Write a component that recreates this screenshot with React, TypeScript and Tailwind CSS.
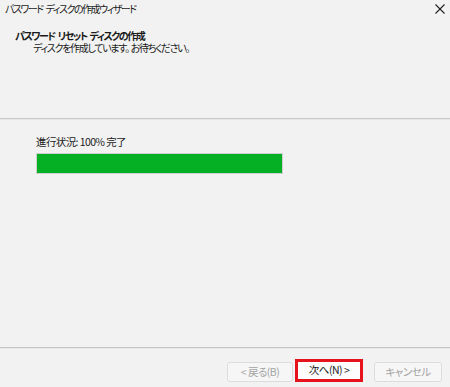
import React from 'react';

const font = {
  fontFamily: '"Noto Sans CJK JP", "Noto Sans", sans-serif',
};

const App: React.FC = () => {
  return (
    <div
      className="w-[450px] h-[387px] bg-[#f2f2f2] text-[#1a1a1a] flex flex-col overflow-hidden [font-feature-settings:'palt']"
      style={font}
    >
      {/* Title bar */}
      <div className="h-[20px] flex items-start justify-between pl-[5px] pr-[5px] pt-[2px]">
        <div className="flex text-[10px] leading-[14px] tracking-[-1.5px] gap-[3px]">
          <span>パスワード</span>
          <span>ディスクの作成ウィザード</span>
        </div>
        <svg width="10" height="10" viewBox="0 0 10 10" className="mt-[2px]">
          <path d="M0.5 0.5 L9.5 9.5 M9.5 0.5 L0.5 9.5" stroke="#222" strokeWidth="1.1" />
        </svg>
      </div>

      {/* Header */}
      <div className="h-[98px] pl-[15px] pt-[9px] flex flex-col">
        <div className="flex gap-[3px] h-[13px] text-[10px] leading-[13px] font-bold tracking-[-1.5px]">
          <span>パスワード</span>
          <span>リセット</span>
          <span>ディスクの作成</span>
        </div>
        <div className="flex h-[12px] text-[10px] leading-[12px] pl-[18px] tracking-[-1.3px]">
          <span>ディスクを作成しています。</span>
          <span className="ml-[2px]">お待ちください。</span>
        </div>
      </div>
      <div className="h-[2px] border-t border-[#c8c8c8] border-b border-b-[#e6e6e6]" />

      {/* Content */}
      <div className="flex-1 pt-[15px] pl-[36px]">
        <div className="text-[10.5px] leading-[14px] tracking-[-0.6px]">進行状況: 100% 完了</div>
        <div className="mt-[4px] w-[247px] h-[21px] border border-[#cfcfcf] bg-[#e6e6e6]">
          <div className="h-full bg-[#06b025]" style={{ width: '100%' }} />
        </div>
      </div>

      {/* Footer */}
      <div className="h-[2px] border-t border-[#c4c4c4] border-b border-b-[#e8e8e8]" />
      <div className="h-[38px] flex items-end justify-end pr-[8px] pb-[5px]">
        <button
          disabled
          className="w-[66px] h-[20px] rounded-[3px] border border-[#dcdcdc] bg-[#f6f6f6] text-[10.5px] tracking-[-0.5px] text-[#a3a3a3] leading-none"
        >
          &lt; 戻る(B)
        </button>
        <div className="ml-[2px] border-[3px] border-[#e5141c] w-[68px] h-[23px] flex">
          <button className="flex-1 bg-[#fdfdfd] text-[10.5px] tracking-[-0.5px] text-[#1a1a1a] leading-none">次へ(N) &gt;</button>
        </div>
        <button
          disabled
          className="ml-[11px] w-[68px] h-[20px] rounded-[3px] border border-[#dcdcdc] bg-[#f6f6f6] text-[10.5px] tracking-[-0.5px] text-[#a3a3a3] leading-none"
        >
          キャンセル
        </button>
      </div>
    </div>
  );
};

export default App;
